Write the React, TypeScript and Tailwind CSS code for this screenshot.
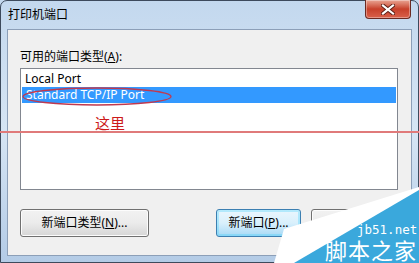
import React from 'react';

const cjk = '"Noto Sans", "Noto Sans CJK SC", sans-serif';

function CloseButton() {
  return (
    <div className="absolute right-[8px] top-0 flex h-[19px] w-[46px] items-center justify-center rounded-b-[4px] border border-t-0 border-[#6b2a22] bg-gradient-to-b from-[#e8a493] via-[#c7402a] to-[#d9604a] shadow-[inset_0_0_0_1px_rgba(255,255,255,0.35)]">
      <svg width="14" height="11" viewBox="0 0 14 11">
        <path d="M2 1.5 L12 9.5 M12 1.5 L2 9.5" stroke="#5a1d14" strokeWidth="4" strokeLinecap="square" />
        <path d="M2 1.5 L12 9.5 M12 1.5 L2 9.5" stroke="#ffffff" strokeWidth="2.2" strokeLinecap="square" />
      </svg>
    </div>
  );
}

function Watermark() {
  return (
    <div className="pointer-events-none absolute inset-0">
      <svg className="absolute inset-0" width="419" height="263" viewBox="0 0 419 263">
        <polygon points="274,263 284,229 419,187 419,263" fill="#ffffff" />
        <polygon points="294,263 419,190 419,263" fill="#3aa8dc" />
      </svg>
      <div
        className="absolute left-[357px] top-[224px] text-[12.5px] leading-[12px] text-white"
        style={{ fontFamily: '"DejaVu Sans Mono", monospace' }}
      >
        jb51.net
      </div>
      <div
        className="absolute left-[325px] top-[238px] text-[22px] leading-[22px] tracking-[1px] text-white"
        style={{ fontFamily: '"Noto Sans CJK SC", sans-serif' }}
      >
        脚本之家
      </div>
    </div>
  );
}

export default function App() {
  return (
    <div
      className="relative h-[263px] w-[419px] overflow-hidden bg-gradient-to-b from-[#c3d8ee] via-[#d6e5f4] to-[#b3cbe6]"
      style={{ fontFamily: cjk }}
    >
      {/* glass frame */}
      <div className="absolute inset-0 rounded-t-[7px] border border-[#3d4a5c]" />
      <div className="relative flex h-full flex-col px-[7px] pb-[7px]">
        <div className="flex h-[29px] items-center pl-[1px] pt-[1px] text-[12px] text-black">打印机端口</div>
        <div className="flex flex-1 flex-col border border-[#8c9fb8] bg-[#f0f0f0] px-[12px]">
          <div className="mt-[20px] text-[12px] leading-[14px] text-black">
            可用的端口类型(<span className="underline">A</span>):
          </div>
          <div className="mt-[4px] flex h-[122px] w-[378px] flex-col border border-[#828790] bg-white p-[1px]">
            <div className="flex h-[17px] items-center pl-[3px] text-[12px] text-black">Local Port</div>
            <div className="flex h-[16px] items-center bg-[#3399ff] pl-[4px] text-[12px] text-white">
              Standard TCP/IP Port
            </div>
          </div>
          <div className="mt-[19px] flex">
            <div className="flex h-[28px] w-[129px] items-center justify-center rounded-[3px] border border-[#707070] bg-gradient-to-b from-[#f2f2f2] via-[#ebebeb] to-[#d6d6d6] text-[12px] text-black shadow-[inset_0_0_0_1px_#fcfcfc]">
              新端口类型(<span className="underline">N</span>)...
            </div>
            <div className="ml-[67px] flex h-[28px] w-[85px] items-center justify-center rounded-[3px] border border-[#3c7fb1] bg-gradient-to-b from-[#eaf6fd] via-[#d9f0fc] to-[#a7d9f5] text-[12px] text-black shadow-[inset_0_0_0_2px_#48d2fb55]">
              新端口(<span className="underline">P</span>)...
            </div>
            {/* third button, mostly hidden under the watermark */}
            <div className="ml-[10px] h-[28px] w-[85px] rounded-[3px] border border-[#707070] bg-gradient-to-b from-[#f2f2f2] via-[#ebebeb] to-[#d6d6d6] shadow-[inset_0_0_0_1px_#fcfcfc]" />
          </div>
        </div>
      </div>
      <CloseButton />

      {/* annotations */}
      <svg className="pointer-events-none absolute left-[21px] top-[86px]" width="154" height="22" viewBox="0 0 154 22">
        <ellipse cx="76" cy="10.5" rx="74" ry="8.5" fill="none" stroke="#c0394f" strokeWidth="1.3" />
      </svg>
      <div
        className="absolute left-[95px] top-[115px] text-[15px] leading-none text-[#cc1a1a]"
        style={{ fontFamily: '"Noto Sans CJK SC", sans-serif' }}
      >
        这里
      </div>
      <div className="absolute left-0 top-[131px] h-[2px] w-full bg-[#e07a7a]" />

      <Watermark />
    </div>
  );
}
